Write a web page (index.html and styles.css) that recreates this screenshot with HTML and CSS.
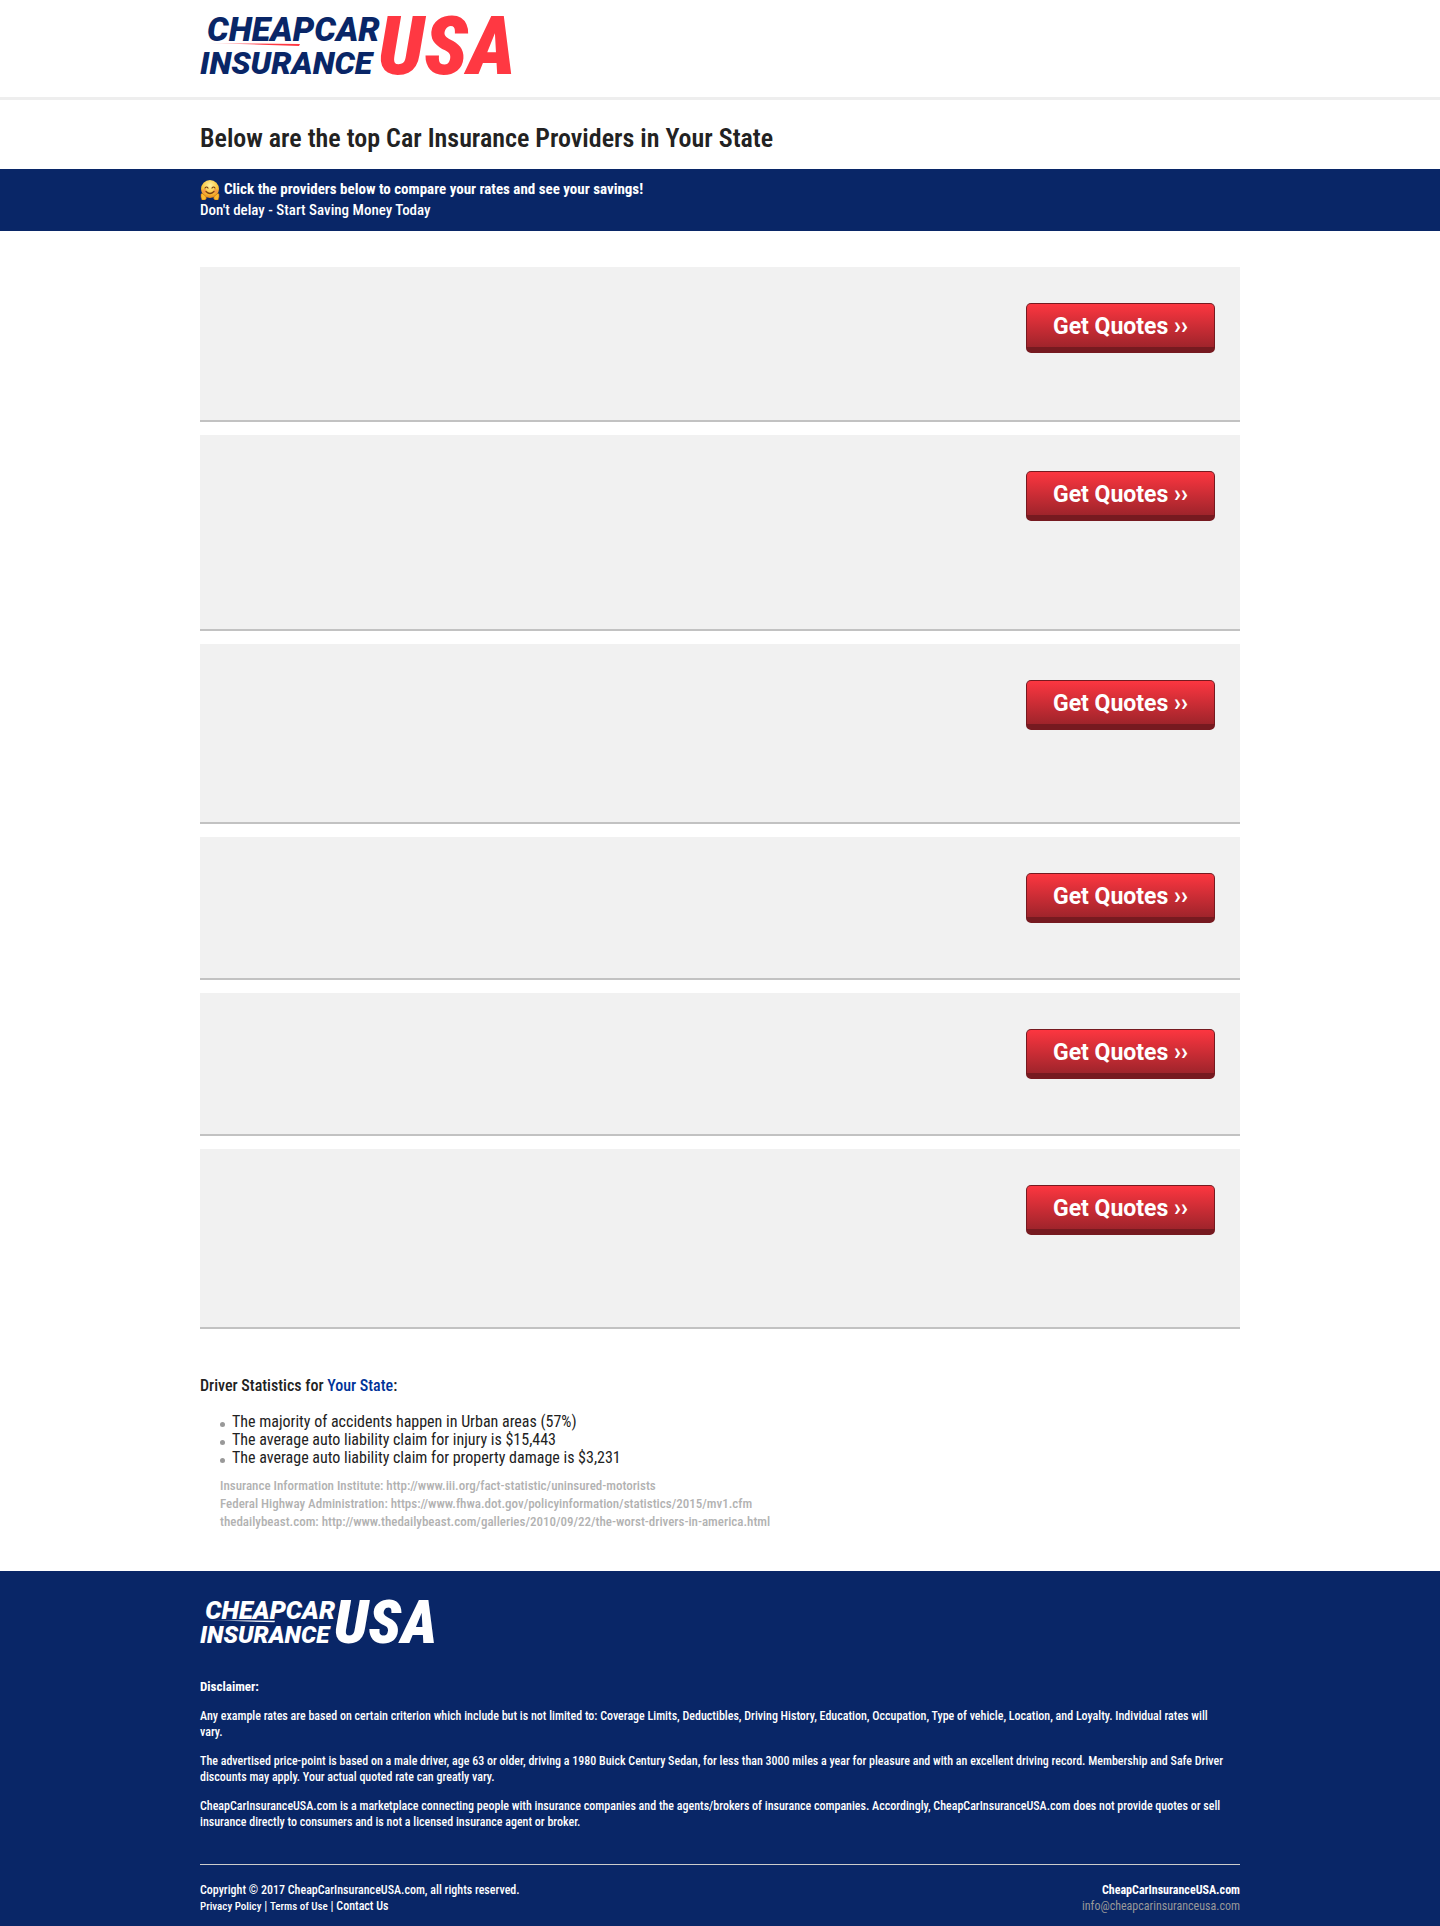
FILE: index.html
```
<!DOCTYPE html>
<html lang="en">
<head>
<meta charset="utf-8">
<meta name="viewport" content="width=device-width, initial-scale=1">
<title>Cheap Car Insurance USA</title>
<link rel="stylesheet" href="styles.css">
</head>
<body>
<header class="site-header">
  <div class="container">
    <a class="logo" href="#" aria-label="Cheap Car Insurance USA">
      <svg class="logo-art" viewBox="0 0 322 62">
        <defs>
          <linearGradient id="swoosh" x1="0" x2="1" y1="0" y2="0">
            <stop offset="0" stop-color="#ff3842" stop-opacity="0"/>
            <stop offset="0.6" stop-color="#ff3842"/>
          </linearGradient>
        </defs>
        <text class="logo-name" x="7" y="26" font-size="34">CHEAPCAR</text>
        <path d="M6 28 L100 29 L99 31 Z" fill="url(#swoosh)"/>
        <text class="logo-name" x="0" y="59" font-size="32">INSURANCE</text>
        <text class="logo-usa" x="178" y="59" font-size="82">USA</text>
      </svg>
    </a>
  </div>
</header>

<main>
  <div class="container">
    <h1 class="page-title">Below are the top Car Insurance Providers in Your State</h1>
  </div>

  <div class="banner">
    <div class="container">
      <p class="banner-lead">
        <svg class="emoji" viewBox="0 0 20 20" aria-hidden="true">
          <defs>
            <radialGradient id="face" cx="0.5" cy="0.3" r="0.7">
              <stop offset="0" stop-color="#fff3a6"/>
              <stop offset="0.6" stop-color="#fbc83f"/>
              <stop offset="1" stop-color="#e8871a"/>
            </radialGradient>
          </defs>
          <circle cx="10" cy="9" r="9" fill="url(#face)"/>
          <circle cx="4.500" cy="11" r="2" fill="#f58a4b" opacity="0.7"/>
          <circle cx="15.500" cy="11" r="2" fill="#f58a4b" opacity="0.7"/>
          <path d="M5 8 Q6.500 6 8 8 M12 8 Q13.500 6 15 8 M6 11.500 Q10 15.500 14 11.500" fill="none" stroke="#7a3d10" stroke-width="1.200" stroke-linecap="round"/>
          <path d="M1 14 Q2.500 12.500 4 15 L6 16.500 Q7 19.500 4.500 20 L2 20 Q0.500 17 1 14 Z M19 14 Q17.500 12.500 16 15 L14 16.500 Q13 19.500 15.500 20 L18 20 Q19.500 17 19 14 Z" fill="#fbb92e" stroke="#c96f14" stroke-width="0.500"/>
        </svg>
        <strong>Click the providers below to compare your rates and see your savings!</strong>
      </p>
      <p class="banner-sub">Don't delay - Start Saving Money Today</p>
    </div>
  </div>

  <div class="container">
    <div class="offers">
      <article class="offer offer-m"><button class="quote-button" type="button">Get Quotes ››</button></article>
      <article class="offer offer-xl"><button class="quote-button" type="button">Get Quotes ››</button></article>
      <article class="offer offer-l"><button class="quote-button" type="button">Get Quotes ››</button></article>
      <article class="offer offer-s"><button class="quote-button" type="button">Get Quotes ››</button></article>
      <article class="offer offer-s"><button class="quote-button" type="button">Get Quotes ››</button></article>
      <article class="offer offer-l"><button class="quote-button" type="button">Get Quotes ››</button></article>
    </div>

    <section class="stats">
      <h2 class="stats-title">Driver Statistics for <span class="state">Your State</span>:</h2>
      <ul class="stats-list">
        <li>The majority of accidents happen in Urban areas (57%)</li>
        <li>The average auto liability claim for injury is $15,443</li>
        <li>The average auto liability claim for property damage is $3,231</li>
      </ul>
      <div class="sources">
        <p>Insurance Information Institute: http://www.iii.org/fact-statistic/uninsured-motorists</p>
        <p>Federal Highway Administration: https://www.fhwa.dot.gov/policyinformation/statistics/2015/mv1.cfm</p>
        <p>thedailybeast.com: http://www.thedailybeast.com/galleries/2010/09/22/the-worst-drivers-in-america.html</p>
      </div>
    </section>
  </div>
</main>

<footer class="site-footer">
  <div class="container">
    <a class="logo logo-small" href="#" aria-label="Cheap Car Insurance USA">
      <svg class="logo-art" viewBox="0 0 322 62">
        <defs>
          <linearGradient id="swoosh-light" x1="0" x2="1" y1="0" y2="0">
            <stop offset="0" stop-color="#fff" stop-opacity="0"/>
            <stop offset="0.6" stop-color="#fff"/>
          </linearGradient>
        </defs>
        <text class="logo-name" x="7" y="26" font-size="34">CHEAPCAR</text>
        <path d="M6 28 L100 29 L99 31 Z" fill="url(#swoosh-light)"/>
        <text class="logo-name" x="0" y="59" font-size="32">INSURANCE</text>
        <text class="logo-usa" x="178" y="59" font-size="82">USA</text>
      </svg>
    </a>
    <div class="disclaimer">
      <h3 class="disclaimer-title">Disclaimer:</h3>
      <p>Any example rates are based on certain criterion which include but is not limited to: Coverage Limits, Deductibles, Driving History, Education, Occupation, Type of vehicle, Location, and Loyalty. Individual rates will<br>vary.</p>
      <p>The advertised price-point is based on a male driver, age 63 or older, driving a 1980 Buick Century Sedan, for less than 3000 miles a year for pleasure and with an excellent driving record. Membership and Safe Driver discounts may apply. Your actual quoted rate can greatly vary.</p>
      <p>CheapCarInsuranceUSA.com is a marketplace connecting people with insurance companies and the agents/brokers of insurance companies. Accordingly, CheapCarInsuranceUSA.com does not provide quotes or sell insurance directly to consumers and is not a licensed insurance agent or broker.</p>
    </div>
    <div class="footer-bottom">
      <div>
        <p>Copyright © 2017 CheapCarInsuranceUSA.com, all rights reserved.</p>
        <p><a class="legal-link" href="#">Privacy Policy</a> | <a class="legal-link" href="#">Terms of Use</a> | <a href="#">Contact Us</a></p>
      </div>
      <div class="contact">
        <p><strong>CheapCarInsuranceUSA.com</strong></p>
        <p><a class="email" href="mailto:info@cheapcarinsuranceusa.com">info@cheapcarinsuranceusa.com</a></p>
      </div>
    </div>
  </div>
</footer>
</body>
</html>
```
FILE: styles.css
```
* { box-sizing: border-box; }

body {
  margin: 0;
  background: #fff;
  color: #222;
  font-family: "Roboto Condensed", Roboto, "Liberation Sans", sans-serif;
  font-size: 16px;
  line-height: 18px;
}

h1, h2, h3, p, ul { margin: 0; padding: 0; }

a { color: inherit; text-decoration: none; }

.container {
  max-width: 1080px;
  margin: 0 auto;
  padding: 0 20px;
}

/* Header */
.site-header {
  padding: 15px 0 20px;
  border-bottom: 3px solid #eee;
}

.logo {
  display: block;
  width: 322px;
  color: #092667;
}

.logo-art { display: block; width: 100%; overflow: visible; }

.logo-name {
  fill: currentColor;
  font-family: Roboto, "Liberation Sans", sans-serif;
  font-weight: 900;
  font-style: italic;
}

.logo-usa {
  fill: #ff3842;
  font-family: "Roboto Condensed", Roboto, sans-serif;
  font-weight: 900;
  font-style: italic;
}

.logo-small { width: 242px; color: #fff; }
.logo-small .logo-usa { fill: #fff; }

.page-title {
  padding: 22px 0 15px;
  font-size: 26px;
  line-height: 32px;
  font-weight: 600;
}

/* Banner */
.banner {
  padding: 10px 0;
  background: #092667;
  color: #fff;
  font-size: 15px;
  line-height: 21px;
}

.banner-lead { display: flex; align-items: center; gap: 4px; }
.emoji { width: 20px; height: 20px; }
.banner-sub { font-weight: 500; }

/* Offers */
.offers {
  display: flex;
  flex-direction: column;
  gap: 13px;
  margin-top: 36px;
}

.offer {
  display: flex;
  justify-content: flex-end;
  align-items: flex-start;
  padding: 36px 25px;
  background: #f1f1f1;
  border-bottom: 2px solid #c2c2c2;
}

.offer-s { min-height: 143px; }
.offer-m { min-height: 155px; }
.offer-l { min-height: 180px; }
.offer-xl { min-height: 196px; }

.quote-button {
  width: 189px;
  height: 50px;
  padding: 2px 0 0;
  border: 1px solid #761a20;
  border-bottom-width: 6px;
  border-radius: 5px;
  background: linear-gradient(#fc3640, #9f242b);
  color: #fff;
  font: 700 23px/40px Roboto, "Liberation Sans", sans-serif;
  cursor: pointer;
}

/* Statistics */
.stats { padding: 47px 0 40px; }

.stats-title {
  font-size: 16px;
  line-height: 20px;
  font-weight: 500;
}

.state { color: #003399; }

.stats-list {
  padding: 17px 0 10px 20px;
  list-style: none;
  font-size: 16px;
}

.stats-list li { display: flex; align-items: center; gap: 7px; }

.stats-list li::before {
  content: "";
  width: 5px;
  height: 5px;
  margin-top: 5px;
  border-radius: 50%;
  background: #999;
}

.sources {
  padding-left: 20px;
  color: #b2b2b2;
  font-size: 13px;
  font-weight: 500;
}

/* Footer */
.site-footer {
  padding: 28px 0 12px;
  background: #092667;
  color: #fff;
  font-size: 12px;
  line-height: 16px;
}

.disclaimer {
  display: grid;
  gap: 13px;
  padding: 33px 0 34px;
  border-bottom: 1px solid #ccc;
  font-weight: 500;
}

.disclaimer-title { font-size: 13px; }

.footer-bottom {
  display: flex;
  justify-content: space-between;
  gap: 20px;
  padding-top: 17px;
  font-weight: 500;
}

.legal-link { font-size: 11px; }
.contact { text-align: right; }
.email { color: #999; font-weight: 400; }
```
